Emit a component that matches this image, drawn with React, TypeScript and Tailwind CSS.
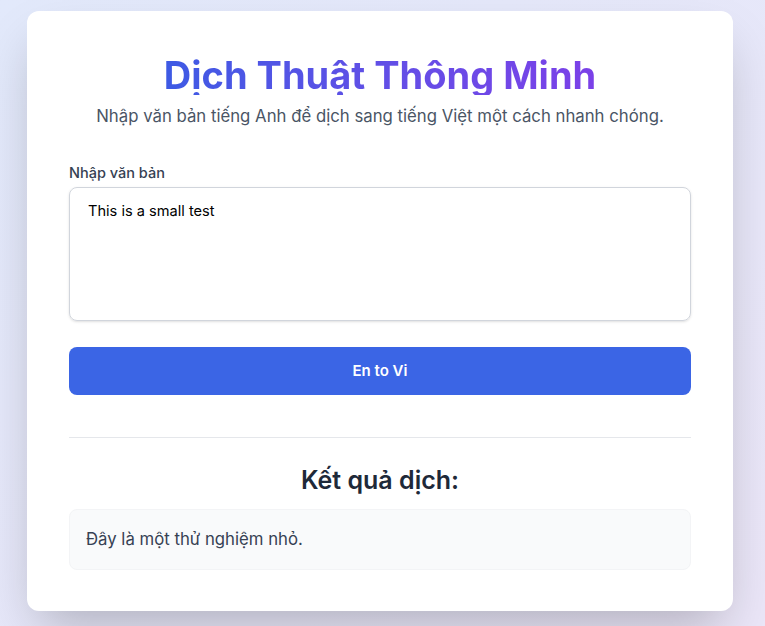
const font = { fontFamily: "Inter, 'Noto Sans', sans-serif" };

export default function App() {
  return (
    <div
      className="min-h-[626px] w-full bg-gradient-to-br from-[#e2e9fb] to-[#ebe6f8] pl-[27px] pr-[32px] pt-[11px] pb-[15px]"
      style={font}
    >
      <div className="w-[706px] rounded-xl bg-white px-[42px] pt-[44px] pb-[41px] shadow-2xl">
        <h1 className="text-center text-[38px] font-bold leading-10">
          <span className="inline-block bg-gradient-to-r from-[#3d5ae4] to-[#7b40e8] bg-clip-text text-transparent">
            Dịch Thuật Thông Minh
          </span>
        </h1>
        <p className="mt-[9px] text-center text-[16.75px] leading-6 text-gray-600">
          Nhập văn bản tiếng Anh để dịch sang tiếng Việt một cách nhanh chóng.
        </p>

        <div className="mt-[35px]">
          <label className="block text-[14.5px] font-medium leading-5 text-gray-700">Nhập văn bản</label>
          <textarea
            className="mt-[4px] block h-[134px] w-full resize-none rounded-lg border border-gray-300 px-[18px] py-[11px] text-[14.6px] leading-6 text-black shadow-sm outline-none"
            defaultValue="This is a small test"
          />
        </div>

        <button className="mt-[26px] h-[48px] w-full rounded-lg bg-[#3b65e5] text-[15px] font-semibold text-white">
          En to Vi
        </button>

        <div className="mt-[42px] border-t border-gray-200 pt-[26px]">
          <h2 className="text-center text-[25px] font-semibold leading-8 text-gray-800">Kết quả dịch:</h2>
          <div className="mt-[13px] rounded-lg border border-gray-100 bg-gray-50 px-[16px] py-[17px] text-[16.75px] leading-[25px] text-gray-700">
            Đây là một thử nghiệm nhỏ.
          </div>
        </div>
      </div>
    </div>
  );
}
